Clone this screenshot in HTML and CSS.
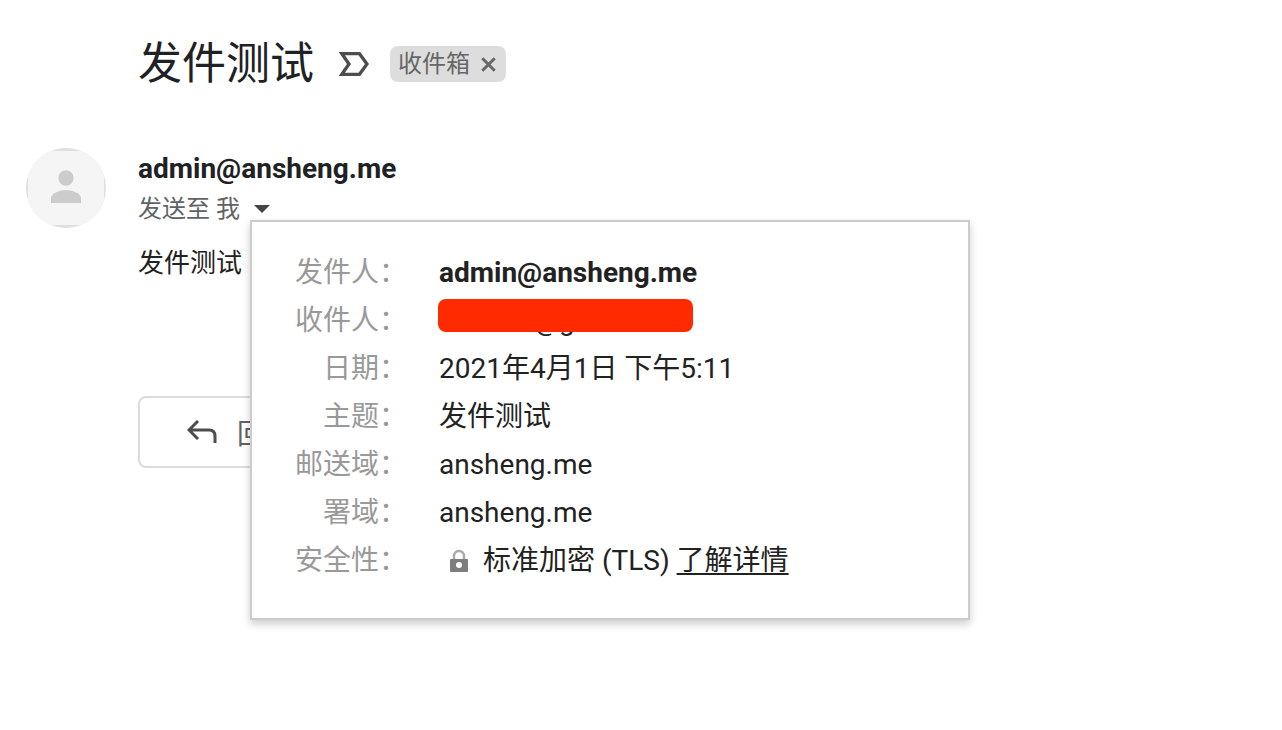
FILE: index.html
```html
<!DOCTYPE html>
<html lang="zh-CN">
<head>
<meta charset="utf-8">
<title>发件测试</title>
<meta name="viewport" content="width=device-width, initial-scale=1">
<link rel="stylesheet" href="styles.css">
</head>
<body>
<main class="mail">
  <header class="subject">
    <h1 class="subject-title">发件测试</h1>
    <button class="icon-button" type="button" aria-label="重要性标记">
      <svg class="marker" viewBox="0 0 30 24" aria-hidden="true"><path d="M2.800 1.700H20.500L28 12L20.500 22.300H2.800L10 12Z" fill="none" stroke="#4d4d4d" stroke-width="3.300"/></svg>
    </button>
    <span class="tag">收件箱
      <button class="icon-button" type="button" aria-label="移除标签">
        <svg class="close" viewBox="0 0 14 14" aria-hidden="true"><path d="M1.200 1.200L12.800 12.800M12.800 1.200L1.200 12.800" stroke="#666" stroke-width="2.800"/></svg>
      </button>
    </span>
  </header>

  <article class="message">
    <svg class="avatar" viewBox="0 0 80 80" aria-hidden="true">
      <clipPath id="inner"><rect x="2" y="3" width="76" height="74"/></clipPath>
      <circle cx="40" cy="40" r="40" fill="#e0e0e0"/>
      <circle cx="40" cy="40" r="40" fill="#f5f5f5" clip-path="url(#inner)"/>
      <circle cx="40" cy="30" r="7.700" fill="#ccc"/>
      <path d="M25 55V50C25 45 34.500 42 40 42S55 45 55 50V55Z" fill="#ccc"/>
    </svg>
    <div class="content">
      <h2 class="sender">admin@ansheng.me</h2>
      <div class="recipients">
        <span>发送至 我</span>
        <div class="details">
          <button class="icon-button" type="button" aria-label="显示详细信息" aria-expanded="true">
            <svg class="caret" viewBox="0 0 16 8" aria-hidden="true"><path d="M0 0H16L8 8Z" fill="#444"/></svg>
          </button>
          <div class="popup">
            <table class="facts">
              <tr><th scope="row">发件人：</th><td><strong>admin@ansheng.me</strong></td></tr>
              <tr><th scope="row">收件人：</th><td><span class="redacted">@g</span></td></tr>
              <tr><th scope="row">日期：</th><td>2021年4月1日 下午5:11</td></tr>
              <tr><th scope="row">主题：</th><td>发件测试</td></tr>
              <tr><th scope="row">邮送域：</th><td>ansheng.me</td></tr>
              <tr><th scope="row">署域：</th><td>ansheng.me</td></tr>
              <tr><th scope="row">安全性：</th><td><span class="security"><svg class="lock" viewBox="0 0 20 24" aria-hidden="true"><path d="M5 11V7a5 5 0 0 1 10 0V11" fill="none" stroke="#aaa" stroke-width="2.500"/><rect x="1" y="10" width="18" height="13" rx="1" fill="#7d7d7d"/><circle cx="10" cy="16" r="3" fill="#fff"/></svg><span>标准加密 (TLS) <a href="#tls">了解详情</a></span></span></td></tr>
            </table>
          </div>
        </div>
      </div>
      <p class="body-text">发件测试</p>
      <button class="reply" type="button">
        <svg class="reply-icon" viewBox="0 0 30 24" aria-hidden="true"><path d="M11 1L2 10L11 19M2 10H22Q28 10 28 16V23" fill="none" stroke="#4d4d4d" stroke-width="3"/></svg>
        回复
      </button>
    </div>
  </article>
</main>
</body>
</html>
```
FILE: styles.css
```css
* { box-sizing: border-box; }

body {
  margin: 0;
  background: #fff;
  color: #202124;
  font-family: Roboto, "Noto Sans CJK SC", sans-serif;
  font-size: 28px;
}

svg { display: block; flex: none; }

.mail {
  min-height: 100vh;
  padding: 30px 26px;
}

.subject {
  display: flex;
  align-items: center;
  padding-left: 112px;
  height: 68px;
}

.subject-title {
  margin: 0 25px 0 0;
  font-size: 44px;
  font-weight: 400;
  line-height: 64px;
}

.icon-button {
  display: block;
  padding: 0;
  border: 0;
  background: none;
  cursor: pointer;
}

.marker { width: 30px; height: 24px; }

.tag {
  display: flex;
  align-items: center;
  gap: 11px;
  height: 36px;
  margin-left: 21px;
  padding: 0 10px 0 8px;
  border-radius: 8px;
  background: #ddd;
  color: #666;
  font-size: 24px;
  line-height: 36px;
}

.close { width: 15px; height: 15px; }

.message {
  display: flex;
  gap: 32px;
  padding-top: 50px;
}

.avatar { width: 80px; height: 80px; }

.content { flex: 1; }

.sender {
  margin: 0;
  font-size: 28px;
  font-weight: 700;
  line-height: 42px;
}

.recipients {
  display: flex;
  align-items: center;
  gap: 14px;
  height: 38px;
  color: #5f6368;
  font-size: 24px;
  line-height: 38px;
}

.details { position: relative; }

.caret { width: 16px; height: 8px; }

.popup {
  position: absolute;
  top: 15px;
  left: -4px;
  width: 720px;
  padding: 27px 43px 33px;
  border: 2px solid #ccc;
  background: #fff;
  box-shadow: 0 4px 8px rgba(0, 0, 0, 0.2);
  color: #222;
}

.facts {
  border-collapse: collapse;
  font-size: 28px;
  line-height: 48px;
  white-space: nowrap;
}

.facts th,
.facts td {
  height: 48px;
  padding: 0;
}

.facts th {
  padding-right: 32px;
  color: #999;
  font-weight: 400;
  text-align: right;
}

.redacted {
  position: relative;
  display: block;
  padding-left: 95px;
}

.redacted::after {
  content: "";
  position: absolute;
  top: 2px;
  left: -1px;
  width: 255px;
  height: 33px;
  border-radius: 8px;
  background: #ff2a00;
}

.security {
  display: flex;
  align-items: center;
  gap: 14px;
  padding-left: 10px;
}

.lock { width: 20px; height: 24px; }

.facts a {
  color: inherit;
  text-underline-offset: 3px;
  text-decoration-thickness: 2px;
  text-decoration-skip-ink: none;
}

.body-text {
  margin: 16px 0 0;
  color: #222;
  font-size: 26px;
  line-height: 38px;
}

.reply {
  display: flex;
  align-items: center;
  gap: 20px;
  height: 72px;
  margin-top: 114px;
  padding: 0 47px;
  border: 2px solid #dadce0;
  border-radius: 8px;
  background: #fff;
  color: #5f6368;
  font: inherit;
}

.reply-icon { width: 30px; height: 24px; }
```
